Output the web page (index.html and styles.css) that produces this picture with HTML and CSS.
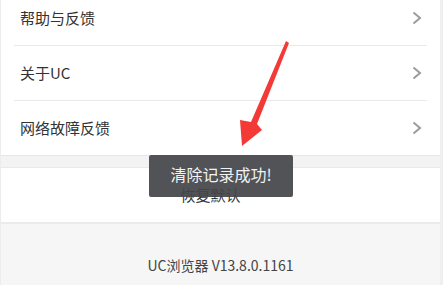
FILE: index.html
```html
<!DOCTYPE html>
<html lang="zh-CN">
<head>
<meta charset="utf-8">
<link rel="stylesheet" href="styles.css">
</head>
<body>
<div class="page">
  <div class="list">
    <div class="row"><span class="label">帮助与反馈</span><svg class="chev" width="10" height="14" viewBox="0 0 10 14"><polyline points="1.5,1.5 8,7 1.5,12.5" fill="none" stroke="#9b9b9b" stroke-width="2"/></svg></div>
    <div class="row"><span class="label">关于UC</span><svg class="chev" width="10" height="14" viewBox="0 0 10 14"><polyline points="1.5,1.5 8,7 1.5,12.5" fill="none" stroke="#9b9b9b" stroke-width="2"/></svg></div>
    <div class="row last"><span class="label">网络故障反馈</span><svg class="chev" width="10" height="14" viewBox="0 0 10 14"><polyline points="1.5,1.5 8,7 1.5,12.5" fill="none" stroke="#9b9b9b" stroke-width="2"/></svg></div>
  </div>
  <div class="band"></div>
  <div class="reset">恢复默认</div>
  <div class="footer">UC浏览器 V13.8.0.1161</div>

  <div class="toast">清除记录成功!</div>
  <svg class="arrow" width="443" height="285" viewBox="0 0 443 285">
    <polygon points="286,41 289,43 257,124 262,130 242,146 240,120 251,122" fill="#f43a36"/>
  </svg>
</div>
</body>
</html>
```

FILE: styles.css
```css
html, body {
  margin: 0;
  padding: 0;
  background: #fff;
}
body {
  font-family: "Noto Sans CJK SC", "Noto Sans", sans-serif;
  color: #333;
  overflow: hidden;
}
.page {
  position: relative;
  width: 443px;
  height: 285px;
  overflow: hidden;
  box-sizing: border-box;
  border-left: 1px solid #ececec;
  border-right: 3px solid #efefef;
}
.list {
  margin-top: -9px;
  background: #fff;
}
.row {
  margin: 0 13px;
  padding: 0 6px;
  display: flex;
  align-items: center;
  justify-content: space-between;
  border-bottom: 1px solid #e9e9e9;
  box-sizing: border-box;
  height: 55px;
}
.row.last {
  border-bottom: none;
  height: 54px;
}
.label {
  font-size: 15px;
  line-height: 20px;
  color: #333;
}
.chev {
  display: block;
  margin-right: -1px;
}
.band {
  height: 11px;
  background: #f3f3f3;
  border-top: 1px solid #e6e6e6;
  border-bottom: 1px solid #e9e9e9;
}
.reset {
  height: 54px;
  line-height: 54px;
  text-align: center;
  padding-right: 20px;
  font-size: 15px;
  color: #333;
  background: #fff;
  border-bottom: 2px solid #ebebeb;
}
.footer {
  background: #f6f6f6;
  height: 80px;
  padding-top: 31px;
  box-sizing: border-box;
  text-align: center;
  font-size: 14px;
  color: #444;
}
.toast {
  position: absolute;
  left: 148px;
  top: 155px;
  width: 144px;
  height: 42px;
  background: rgba(68, 70, 74, 0.93);
  border-radius: 2px;
  color: #f2f2f2;
  font-size: 16px;
  display: flex;
  align-items: center;
  justify-content: center;
  padding-bottom: 4px;
  box-sizing: border-box;
}
.arrow {
  position: absolute;
  left: -1px;
  top: 0;
}
```
